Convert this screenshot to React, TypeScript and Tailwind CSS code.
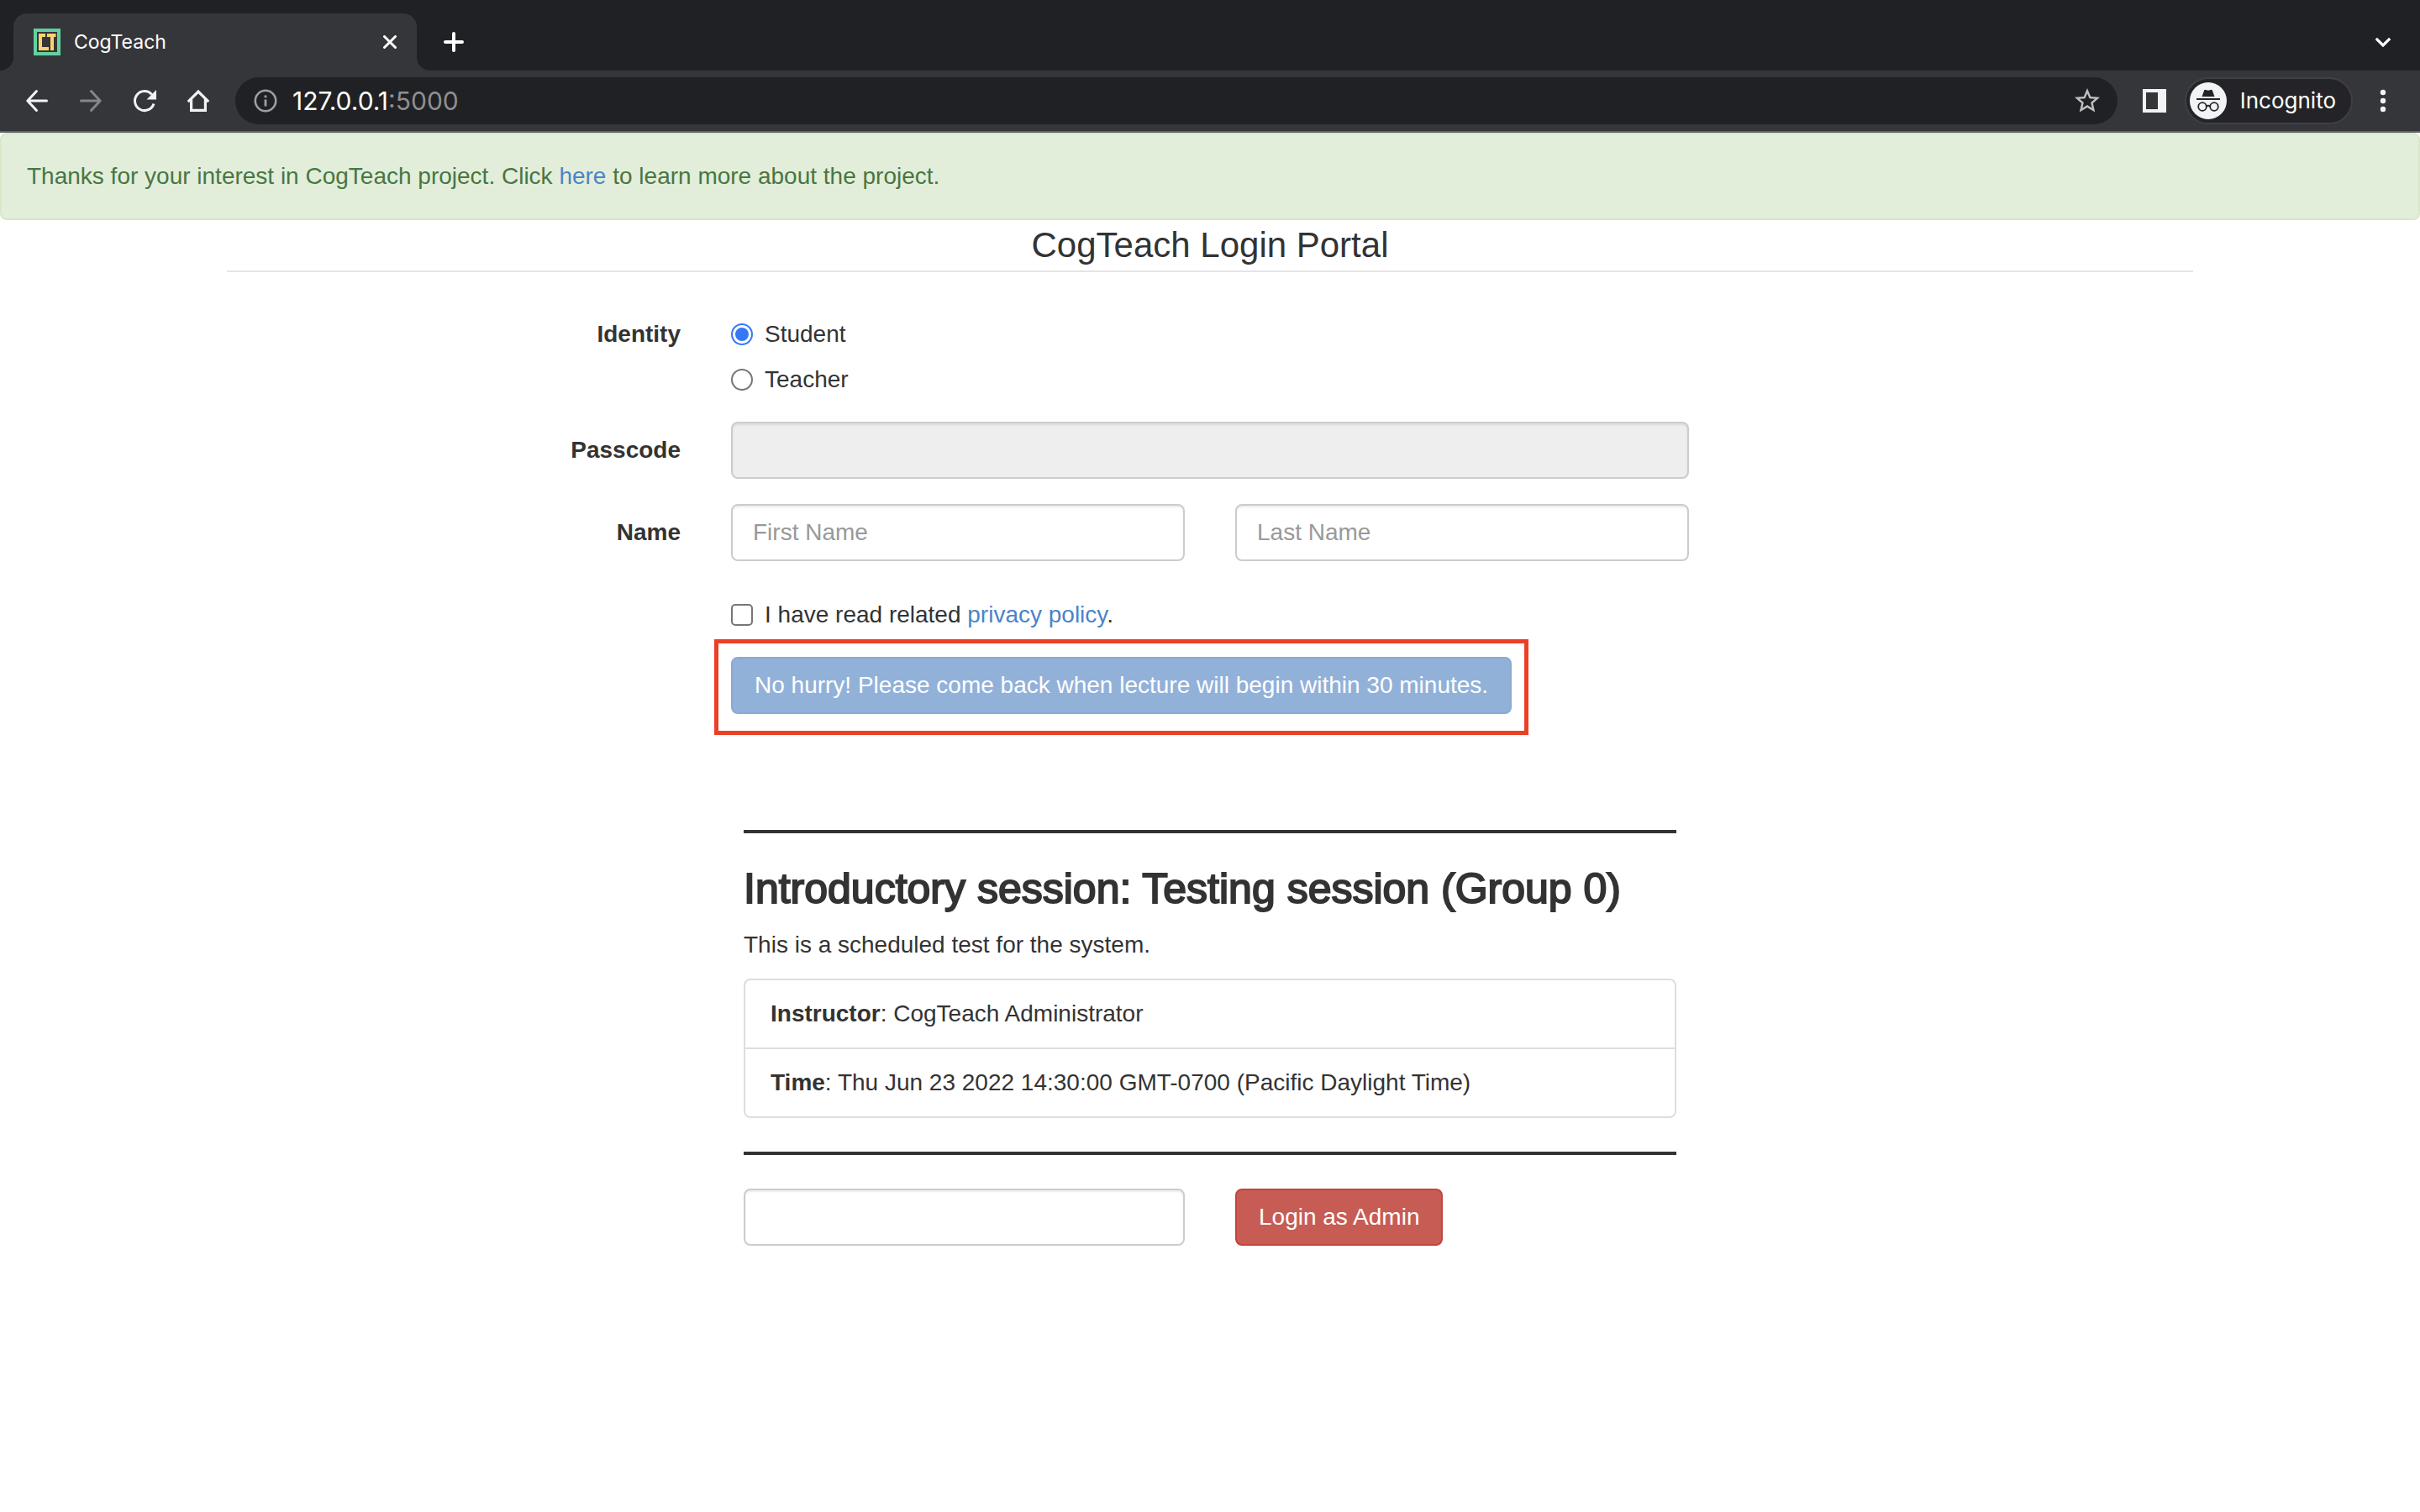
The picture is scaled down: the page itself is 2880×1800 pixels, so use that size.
import React from "react";

const inputClass =
  "h-[68px] w-full rounded-lg border-2 border-[#ccc] px-6 text-[28px] leading-10 text-[#555] shadow-[inset_0_2px_2px_rgba(0,0,0,0.075)] outline-none placeholder:text-[#999]";
const labelClass = "pt-[14px] text-right font-bold";
const rowClass = "grid grid-cols-[1fr_2fr_1fr] gap-x-[60px]";
const radioClass =
  "flex size-[26px] shrink-0 appearance-none items-center justify-center rounded-full border-2 border-[#767676] checked:border-[#3478f6] checked:before:size-4 checked:before:rounded-full checked:before:bg-[#3478f6]";
const linkClass = "text-[#4a84c8]";

function Favicon() {
  return (
    <svg viewBox="0 0 32 32" className="size-8 shrink-0" aria-hidden="true">
      <path fill="#62d2a2" d="M0 0h32v32H0z" />
      <path fill="#363636" d="M4 4h24v24H4z" />
      <path fill="#f9d371" d="M6 6h8v4h-4v12h8v4H6zM16 6h10.500v4H24v16h-4V10h-4z" />
    </svg>
  );
}

function TabStrip() {
  return (
    <div className="flex h-[84px] items-end bg-[#202124]">
      <div className="flex size-4 bg-[#35363a]">
        <div className="size-4 rounded-br-2xl bg-[#202124]" />
      </div>
      <div className="flex h-[68px] w-[480px] items-center rounded-t-2xl bg-[#35363a] px-6">
        <Favicon />
        <span className="ml-4 flex-1 text-[23px] text-white">CogTeach</span>
        <button type="button" aria-label="Close tab">
          <svg viewBox="0 0 16 16" className="size-4" fill="none" stroke="#fff" strokeWidth="3" strokeLinecap="round">
            <path d="M1.500 1.500l13 13M14.500 1.500l-13 13" />
          </svg>
        </button>
      </div>
      <div className="flex size-4 bg-[#35363a]">
        <div className="size-4 rounded-bl-2xl bg-[#202124]" />
      </div>
      <div className="flex h-[68px] flex-1 items-center justify-between pl-4 pr-[34px]">
        <button type="button" aria-label="New tab">
          <svg viewBox="0 0 24 24" className="size-6" fill="none" stroke="#fff" strokeWidth="4" strokeLinecap="round">
            <path d="M12 2v20M2 12h20" />
          </svg>
        </button>
        <button type="button" aria-label="Search tabs">
          <svg viewBox="0 0 20 12" className="h-3 w-5" fill="none" stroke="#fff" strokeWidth="3.200">
            <path d="M1.800 1.800L10 10l8.200-8.200" />
          </svg>
        </button>
      </div>
    </div>
  );
}

function Toolbar() {
  return (
    <div className="flex h-[74px] items-center border-b-2 border-[#5f6368] bg-[#35363a] px-7">
      <div className="flex items-center gap-8">
        <button type="button" aria-label="Back">
          <svg viewBox="0 0 32 32" className="size-8" fill="none" stroke="#f1f3f4" strokeWidth="3" strokeLinecap="round" strokeLinejoin="round">
            <path d="M27.500 16H5M15.500 4.500L4.800 16l10.700 11.500" />
          </svg>
        </button>
        <button type="button" aria-label="Forward">
          <svg viewBox="0 0 32 32" className="size-8" fill="none" stroke="#85868a" strokeWidth="3" strokeLinecap="round" strokeLinejoin="round">
            <path d="M4.500 16h22.500M16.500 4.500L27.200 16 16.500 27.500" />
          </svg>
        </button>
        <button type="button" aria-label="Reload">
          <svg viewBox="0 0 32 32" className="size-8">
            <path d="M24.600 8.400A11.500 11.500 0 1 0 27 19.500" fill="none" stroke="#f1f3f4" strokeWidth="3" />
            <path d="M30 3v11.500H18.500z" fill="#f1f3f4" />
          </svg>
        </button>
        <button type="button" aria-label="Home">
          <svg viewBox="0 0 32 32" className="size-8" fill="none" stroke="#f1f3f4" strokeWidth="3.200">
            <path d="M3.800 17.200L16 5l12.200 12.200M7.600 14v13.400h16.800V14" />
          </svg>
        </button>
      </div>
      <div className="ml-7 mr-[30px] flex h-14 flex-1 items-center rounded-full bg-[#202124] pl-[22px] pr-[18px]">
        <svg viewBox="0 0 28 28" className="size-7 shrink-0" aria-hidden="true">
          <circle cx="14" cy="14" r="12.200" fill="none" stroke="#9aa0a6" strokeWidth="2.600" />
          <path d="M12.600 7.500h2.800v2.800h-2.800zM12.600 12.500h2.800v8h-2.800z" fill="#9aa0a6" />
        </svg>
        <span className="ml-[18px] flex-1 text-[30px] leading-8 text-white">
          127.0.0.1<span className="text-[#8e8f92]">:5000</span>
        </span>
        <button type="button" aria-label="Bookmark this tab">
          <svg viewBox="0 0 24 24" className="size-9" fill="#bfc0c2">
            <path d="M22 9.240l-7.190-.62L12 2 9.190 8.630 2 9.240l5.460 4.730L5.820 21 12 17.270 18.180 21l-1.630-7.030L22 9.240zM12 15.400l-3.760 2.270 1-4.280-3.320-2.880 4.380-.38L12 6.100l1.710 4.040 4.380.38-3.320 2.880 1 4.280L12 15.400z" />
          </svg>
        </button>
      </div>
      <button type="button" aria-label="Side panel" className="mr-[22px]">
        <svg viewBox="0 0 28 28" className="size-7">
          <path fill="#f1f3f4" fillRule="evenodd" d="M0 0h28v28H0zM4 4v20h14V4z" />
        </svg>
      </button>
      <button type="button" className="mr-5 flex h-14 items-center gap-4 rounded-full border-2 border-[#3f4045] bg-[#242428] pl-1 pr-[18px]">
        <svg viewBox="0 0 44 44" className="size-11" aria-hidden="true">
          <circle cx="22" cy="22" r="22" fill="#f1f3f4" />
          <path fill="#242428" d="M14.500 17l2.600-7.200q.5-1.400 2-.8l2.900.8 2.900-.8q1.500-.6 2 .8l2.600 7.200zM8 19h28v2H8z" />
          <g fill="none" stroke="#242428" strokeWidth="1.800">
            <circle cx="15" cy="29" r="4.800" />
            <circle cx="29" cy="29" r="4.800" />
            <path d="M19.800 28.500q2.200-1.500 4.400 0" />
          </g>
        </svg>
        <span className="text-[26px] text-white">Incognito</span>
      </button>
      <button type="button" aria-label="Menu">
        <svg viewBox="0 0 32 32" className="size-8" fill="#f1f3f4">
          <circle cx="16" cy="6" r="3.200" />
          <circle cx="16" cy="16" r="3.200" />
          <circle cx="16" cy="26" r="3.200" />
        </svg>
      </button>
    </div>
  );
}

export default function App() {
  return (
    <div className="min-h-screen bg-white font-['Liberation_Sans',Arial,sans-serif] text-[28px] leading-10 text-[#333]">
      <header className="font-[Inter,sans-serif]">
        <TabStrip />
        <Toolbar />
      </header>

      <div role="alert" className="rounded-lg border-2 border-[#dae7c8] bg-[#e2eeda] p-[30px] text-[#497642]">
        Thanks for your interest in CogTeach project. Click{" "}
        <a href="#about" className={linkClass}>here</a> to learn more about the project.
      </div>

      <main className="mx-auto max-w-[2340px]">
        <h1 className="mb-10 border-b-2 border-[#e5e5e5] text-center text-[42px] leading-[60px]">
          CogTeach Login Portal
        </h1>

        <form className="-mx-[30px] flex flex-col gap-[30px]" onSubmit={(e) => e.preventDefault()}>
          <div role="radiogroup" aria-labelledby="identity-label" className={rowClass}>
            <div id="identity-label" className={labelClass}>Identity</div>
            <div>
              <label className="flex items-center gap-[14px] pt-[14px]">
                <input type="radio" name="identity" defaultChecked className={radioClass} />
                Student
              </label>
              <label className="flex items-center gap-[14px] pt-[14px]">
                <input type="radio" name="identity" className={radioClass} />
                Teacher
              </label>
            </div>
          </div>

          <div className={rowClass}>
            <label htmlFor="passcode" className={labelClass}>Passcode</label>
            <input id="passcode" type="password" disabled className={inputClass + " bg-[#eee]"} />
          </div>

          <div className={rowClass}>
            <label htmlFor="first-name" className={labelClass}>Name</label>
            <div className="grid grid-cols-2 gap-[60px]">
              <input id="first-name" type="text" placeholder="First Name" className={inputClass} />
              <input type="text" aria-label="Last Name" placeholder="Last Name" className={inputClass} />
            </div>
          </div>

          <div className={rowClass}>
            <div className="col-start-2 flex items-center gap-[14px] pt-[14px]">
              <input
                id="privacy"
                type="checkbox"
                className="size-[26px] appearance-none rounded-[5px] border-2 border-[#767676] checked:bg-[#3478f6]"
              />
              <label htmlFor="privacy">
                I have read related <a href="#privacy-policy" className={linkClass}>privacy policy</a>.
              </label>
            </div>
          </div>

          <div className={rowClass}>
            <div className="col-start-2">
              <div className="relative w-fit">
                <button
                  type="submit"
                  disabled
                  className="block h-[68px] rounded-lg border-2 border-[#8aaad3] bg-[#92b1d9] px-[26px] text-white"
                >
                  No hurry! Please come back when lecture will begin within 30 minutes.
                </button>
                <div className="pointer-events-none absolute -inset-x-5 -bottom-[25px] -top-[21px] border-[5px] border-[#eb4025]" />
              </div>
            </div>
          </div>
        </form>

        <div className={rowClass + " -mx-[30px] mt-[138px]"}>
          <div className="col-start-2 px-[15px]">
            <section className="border-y-4 border-[#333] py-10">
              <h2 className="mb-5 text-[50px] leading-[53px] [-webkit-text-stroke:2px_#333]">
                Introductory session: Testing session (Group 0)
              </h2>
              <p className="mb-5">This is a scheduled test for the system.</p>
              <ul className="divide-y-2 divide-[#ddd] rounded-lg border-2 border-[#ddd]">
                <li className="px-[30px] py-5"><b>Instructor</b>: CogTeach Administrator</li>
                <li className="px-[30px] py-5"><b>Time</b>: Thu Jun 23 2022 14:30:00 GMT-0700 (Pacific Daylight Time)</li>
              </ul>
            </section>
            <form className="mt-10 grid grid-cols-2 gap-[60px]" onSubmit={(e) => e.preventDefault()}>
              <input type="password" aria-label="Admin password" className={inputClass} />
              <button type="submit" className="h-[68px] justify-self-start rounded-lg border-2 border-[#c2453c] bg-[#c75c55] px-[26px] text-white">
                Login as Admin
              </button>
            </form>
          </div>
        </div>
      </main>
    </div>
  );
}
